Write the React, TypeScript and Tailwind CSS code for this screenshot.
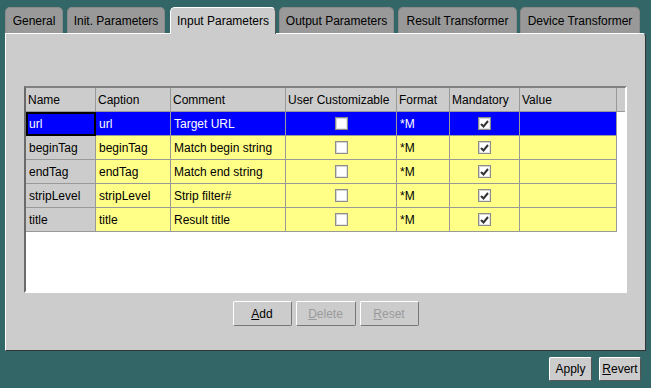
const tabs = [
  { label: 'General', w: 'w-[58px]', ml: 'ml-0' },
  { label: 'Init. Parameters', w: 'w-[98px]', ml: 'ml-[4px]' },
  { label: 'Input Parameters', w: 'w-[106px]', ml: 'ml-[5px]', active: true },
  { label: 'Output Parameters', w: 'w-[115px]', ml: 'ml-[3px]' },
  { label: 'Result Transformer', w: 'w-[119px]', ml: 'ml-[4px]' },
  { label: 'Device Transformer', w: 'w-[120px]', ml: 'ml-[3px]' },
]

const cols = [
  { title: 'Name', w: 'w-[70px]' },
  { title: 'Caption', w: 'w-[75px]' },
  { title: 'Comment', w: 'w-[115px]' },
  { title: 'User Customizable', w: 'w-[111px]' },
  { title: 'Format', w: 'w-[53px]' },
  { title: 'Mandatory', w: 'w-[70px]' },
  { title: 'Value', w: 'w-[97px]' },
]

const rows = [
  { name: 'url', caption: 'url', comment: 'Target URL' },
  { name: 'beginTag', caption: 'beginTag', comment: 'Match begin string' },
  { name: 'endTag', caption: 'endTag', comment: 'Match end string' },
  { name: 'stripLevel', caption: 'stripLevel', comment: 'Strip filter#' },
  { name: 'title', caption: 'title', comment: 'Result title' },
]

function CheckBox({ checked }: { checked?: boolean }) {
  return (
    <div className="w-[13px] h-[13px] border border-[#8c8c8c] bg-white shadow-[inset_1px_1px_0_#d4d4d4,inset_-1px_-1px_0_#e6e6e6] flex items-center justify-center">
      {checked && (
        <svg width="9" height="8" viewBox="0 0 9 8">
          <path d="M1 4 L3.5 6.5 L8 1" stroke="#333" strokeWidth="2" fill="none" />
        </svg>
      )}
    </div>
  )
}

function Button({ label, disabled, w }: { label: string; disabled?: boolean; w: string }) {
  return (
    <div
      className={`${w} h-[25px] rounded-[2px] border border-t-white border-l-white border-r-[#777] border-b-[#777] bg-[#cccccc] flex items-center justify-center text-[12px] ${disabled ? 'text-[#9a9a9a]' : 'text-black'}`}
    >
      <span>
        <span className="underline">{label[0]}</span>
        {label.slice(1)}
      </span>
    </div>
  )
}

export default function App() {
  return (
    <div className="w-[651px] h-[388px] bg-[#336666] overflow-hidden font-[family-name:Liberation_Sans,Arial,sans-serif] text-[12px] text-black">
      {/* Tabs */}
      <div className="flex items-end pl-[5px] pt-[7px] h-[33px]">
        {tabs.map((t) => (
          <div
            key={t.label}
            className={`${t.w} ${t.ml} h-[26px] rounded-t-[5px] flex items-center justify-center ${
              t.active
                ? 'relative z-10 -mb-px h-[27px] pb-px bg-[#cccccc] border-t border-l border-white border-r border-r-[#555]'
                : 'bg-[#999999] border-t border-l border-r border-[#8a8a8a]'
            }`}
          >
            {t.label}
          </div>
        ))}
      </div>

      {/* Panel */}
      <div className="ml-[5px] w-[641px] h-[318px] bg-[#cccccc] border-t border-l border-white border-r border-b border-r-[#333] border-b-[#333] rounded-tr-[4px] flex flex-col items-start">
        <div className="ml-[18px] mt-[52px] w-[603px] h-[207px] border-t-2 border-l-2 border-t-[#808080] border-l-[#6a6a6a] border-r-2 border-b-2 border-r-white border-b-white bg-white flex flex-col">
          {/* Header */}
          <div className="flex h-[24px] bg-[#cccccc] border-b border-[#999]">
            {cols.map((c) => (
              <div key={c.title} className={`${c.w} h-full border-r border-[#999] pl-[2px] flex items-center whitespace-nowrap overflow-hidden`}>
                {c.title}
              </div>
            ))}
            <div className="flex-1 h-full bg-[#cccccc]" />
          </div>
          {/* Rows */}
          {rows.map((r, i) => {
            const sel = i === 0
            const cell = sel ? 'bg-[#0000ff] text-white' : 'bg-[#ffff88]'
            return (
              <div key={r.name} className="flex h-[24px]">
                <div
                  className={`w-[70px] h-full flex items-center ${
                    sel ? 'bg-[#0000ff] text-white border-2 border-black pl-[1px]' : 'bg-[#cccccc] pl-[3px] border-r border-b border-[#999]'
                  }`}
                >
                  {r.name}
                </div>
                <div className={`w-[75px] h-full ${cell} border-r border-b border-[#999] pl-[3px] flex items-center`}>{r.caption}</div>
                <div className={`w-[115px] h-full ${cell} border-r border-b border-[#999] pl-[3px] flex items-center`}>{r.comment}</div>
                <div className={`w-[111px] h-full ${cell} border-r border-b border-[#999] flex items-center justify-center`}>
                  <CheckBox />
                </div>
                <div className={`w-[53px] h-full ${cell} border-r border-b border-[#999] pl-[3px] flex items-center`}>*M</div>
                <div className={`w-[70px] h-full ${cell} border-r border-b border-[#999] flex items-center justify-center`}>
                  <CheckBox checked />
                </div>
                <div className={`w-[97px] h-full ${cell} border-r border-b border-[#999]`} />
              </div>
            )
          })}
        </div>

        <div className="self-stretch flex justify-center gap-[4px] mt-[8px]">
          <Button label="Add" w="w-[59px]" />
          <Button label="Delete" w="w-[60px]" disabled />
          <Button label="Reset" w="w-[59px]" disabled />
        </div>
      </div>

      {/* Bottom buttons */}
      <div className="flex justify-end gap-[7px] pr-[10px] mt-[6px]">
        <div className="w-[43px] h-[24px] rounded-[2px] border border-t-white border-l-white border-r-[#555] border-b-[#555] bg-[#cccccc] flex items-center justify-center">
          Apply
        </div>
        <div className="w-[42px] h-[24px] rounded-[2px] border border-t-white border-l-white border-r-[#555] border-b-[#555] bg-[#cccccc] flex items-center justify-center">
          <span>
            <span className="underline">R</span>evert
          </span>
        </div>
      </div>
    </div>
  )
}
